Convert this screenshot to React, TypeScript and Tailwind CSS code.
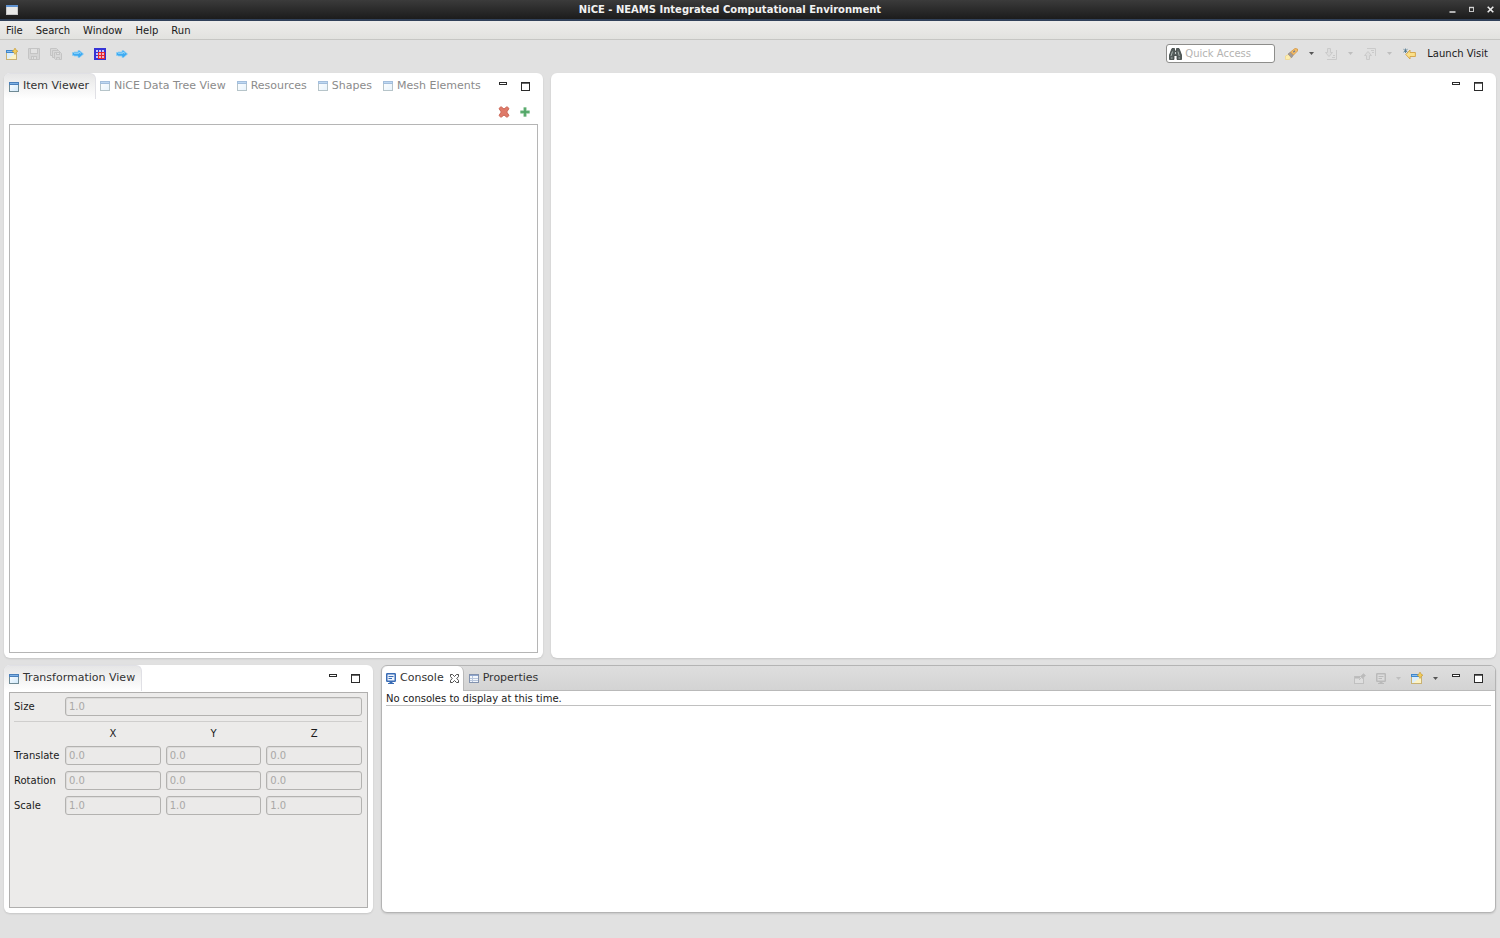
import type { ReactNode } from "react";
import clsx from "clsx";

const MENUS = ["File", "Search", "Window", "Help", "Run"];
const VIEW_TABS = ["Item Viewer", "NiCE Data Tree View", "Resources", "Shapes", "Mesh Elements"];
const AXES = ["X", "Y", "Z"];
const TRANSFORM_ROWS = [
  { label: "Translate", value: "0.0" },
  { label: "Rotation", value: "0.0" },
  { label: "Scale", value: "1.0" },
];

const FIELD =
  "h-[19px] w-full min-w-0 rounded-[3px] border border-[#b3b2b0] bg-[#ebeae9] px-[3px] text-[10px] text-[#a9a8a6] shadow-[inset_1px_1px_0_#dddcdb]";

/* ---------- icons ---------- */

function ViewIcon({ faded }: { faded?: boolean }) {
  return (
    <svg viewBox="0 0 10 10" className={clsx("size-[10px] shrink-0", faded && "opacity-50")}>
      <defs>
        <linearGradient id="viewBody" x1="0" y1="0" x2="1" y2="1">
          <stop offset="0" stopColor="#ffffff" />
          <stop offset="1" stopColor="#cfe8fb" />
        </linearGradient>
      </defs>
      <rect x="0.5" y="0.5" width="9" height="9" fill="url(#viewBody)" stroke="#6f8a94" />
      <rect x="0" y="0" width="10" height="3" fill="#4a7fba" />
      <rect x="1" y="1" width="8" height="1" fill="#7fb2e6" />
    </svg>
  );
}

function WindowIcon() {
  return (
    <svg viewBox="0 0 12 10" className="h-[10px] w-3">
      <rect x="0.5" y="0.5" width="11" height="9" fill="#e9e9e7" stroke="#c9c9c9" />
      <rect x="0" y="0" width="12" height="2" fill="#5f92d0" />
    </svg>
  );
}

function NewIcon() {
  return (
    <svg viewBox="0 0 12 12" className="size-3">
      <rect x="0.5" y="2.5" width="10" height="9" fill="#dceefb" stroke="#c9b273" />
      <path d="M2 11 L10 5 V11 Z" fill="#fdf3c4" />
      <rect x="0" y="2" width="8" height="3" fill="#3f86cc" />
      <rect x="1" y="3" width="6" height="1" fill="#8cc0ee" />
      <path d="M9 0 L10 2 L12 3.2 L10 4.4 L9 6.5 L8 4.4 L6 3.2 L8 2 Z" fill="#f3cd5a" stroke="#c79c37" strokeWidth="0.6" />
    </svg>
  );
}

function SaveIcon() {
  return (
    <svg viewBox="0 0 12 12" className="size-3" fill="none" stroke="#c4c4c4">
      <path d="M0.5 0.5 H11.5 V11.5 H1.5 L0.5 10.5 Z" fill="#d4d4d4" />
      <rect x="2.5" y="0.5" width="7" height="5" fill="#e2e2e2" />
      <rect x="3.5" y="8.5" width="5" height="3" fill="#dedede" />
      <path d="M5.5 9 V11" />
    </svg>
  );
}

function SaveAllIcon() {
  return (
    <svg viewBox="0 0 12 12" className="size-3" fill="#d8d8d8" stroke="#c4c4c4">
      <path d="M0.5 0.5 H6.5 L8.5 2.5 V7.5 H0.5 Z" />
      <path d="M2.5 2.5 H8.5 L10.5 4.5 V9.5 H2.5 Z" />
      <path d="M4.5 4.5 H10.5 L11.5 5.5 V11.5 H5.5 L4.5 10.5 Z" />
      <rect x="6.5" y="4.5" width="3" height="2" fill="#e2e2e2" />
      <path d="M6.5 11.5 V9.5 H9.5 V11.5" />
    </svg>
  );
}

function BlueArrowIcon() {
  return (
    <svg viewBox="0 0 12 12" className="size-3">
      <path
        d="M0.5 4.5 H2 V4 H6 V2.5 H7.5 L11.5 6 L7.5 9.5 H6 V8 H2 V7.5 H0.5 Z"
        fill="#3fabf2"
        stroke="#8accf3"
        strokeWidth="0.7"
      />
      <path d="M2 5.2 H7 V4 L9 5.4" stroke="#9bdafc" fill="none" />
    </svg>
  );
}

function MeshIcon() {
  return (
    <svg viewBox="0 0 12 12" className="size-3" shapeRendering="crispEdges">
      <rect width="12" height="12" fill="#3533d6" />
      <path d="M4 4 H11 V11 H4 Z" fill="#e6262f" />
      {[2, 5, 8].map((x) =>
        [2, 5, 8].map((y) => (
          <rect key={`${x}-${y}`} x={x} y={y} width="2" height="2" fill={x > 2 && y > 2 ? "#f5b3ba" : "#c9c8f4"} />
        ))
      )}
    </svg>
  );
}

function BinocularsIcon() {
  return (
    <svg viewBox="0 0 13 12" className="h-3 w-[13px] shrink-0">
      <path
        d="M3 0.5 H5.5 V3 H7.5 V0.5 H10 L11 3 L12.5 7 V11.5 H8 V7.5 H5 V11.5 H0.5 V7 L2 3 Z"
        fill="#555e5d"
        stroke="#38403f"
        strokeWidth="0.8"
      />
      <path d="M3.5 3.5 L2 8 M9 3.5 L10.3 8 M2 10 H3.5 M9.5 10 H11" stroke="#aab3b1" />
      <rect x="6" y="4" width="1" height="2" fill="#c5cccb" />
    </svg>
  );
}

function FlashlightIcon() {
  return (
    <svg viewBox="0 0 13 12" className="h-3 w-[13px]">
      <path d="M0.5 8 L3.5 6.5 L6 9 L4.5 11.5 H0.5 Z" fill="#fdeeb0" stroke="#f0d487" strokeWidth="0.7" />
      <path d="M3 6 L5.5 4 L8.5 7 L6.5 9.8 Z" fill="#a19a98" stroke="#8d827c" strokeWidth="0.6" />
      <path d="M5.5 4 L10 0.5 L12.5 1 V3 L8.5 7 Z" fill="#f3bd69" stroke="#d4963f" strokeWidth="0.8" />
      <path d="M8.3 4.3 L10 2.8" stroke="#6f7b93" strokeWidth="1.2" />
    </svg>
  );
}

function AnnotationIcon({ up }: { up?: boolean }) {
  return (
    <svg viewBox="0 0 12 12" className="size-3" fill="none" stroke="#cacaca">
      {up ? (
        <>
          <path d="M4 3.5 L7.5 7.5 H5.5 V11.5 H2.5 V7.5 H0.5 Z" fill="#dcdcdc" />
          <path d="M3 0.5 H11.5 V8 M7 2.5 H10 M8 4.5 H10" />
        </>
      ) : (
        <>
          <path d="M4 8.5 L7.5 4.5 H5.5 V0.5 H2.5 V4.5 H0.5 Z" fill="#dcdcdc" />
          <path d="M11.5 2 V11.5 H2 M8 7.5 H10 M7 9.5 H10" />
        </>
      )}
    </svg>
  );
}

function LastEditIcon() {
  return (
    <svg viewBox="0 0 13 12" className="h-3 w-[13px]">
      <path
        d="M2.8 6.5 L7 2 V4.5 H12.4 V8.5 H7 V11 Z"
        fill="#fbe089"
        stroke="#d3a244"
        strokeWidth="0.9"
      />
      <path d="M2.5 0.5 V5 M0.5 1.3 L4.5 4.2 M4.5 1.3 L0.5 4.2" stroke="#48718a" strokeWidth="0.8" />
    </svg>
  );
}

function Caret({ faded }: { faded?: boolean }) {
  return (
    <svg viewBox="0 0 5 3" className="h-[3px] w-[5px]">
      <path d="M0 0 H5 L2.5 3 Z" fill={faded ? "#bebebe" : "#555"} />
    </svg>
  );
}

function MinimizeIcon() {
  return (
    <svg viewBox="0 0 8 9" className="h-[9px] w-2">
      <rect x="0.5" y="0.5" width="7" height="2" fill="#fff" stroke="#2b2b2b" />
    </svg>
  );
}

function MaximizeIcon() {
  return (
    <svg viewBox="0 0 9 9" className="size-[9px]">
      <rect x="0.5" y="0.5" width="8" height="8" fill="#fff" stroke="#2b2b2b" />
      <path d="M1 1.5 H8" stroke="#6a6a6a" />
    </svg>
  );
}

function DeleteIcon() {
  return (
    <svg viewBox="0 0 12 12" className="size-3">
      <path
        d="M1 2.5 L3 0.7 L6 3 L9 0.7 L11 2.5 L8.7 6 L11 9.5 L9 11.3 L6 9 L3 11.3 L1 9.5 L3.3 6 Z"
        fill="#df7a69"
        stroke="#cb6655"
        strokeLinejoin="round"
      />
    </svg>
  );
}

function AddIcon() {
  return (
    <svg viewBox="0 0 10 10" className="size-[10px]">
      <path d="M3.8 0.5 H6.2 V3.8 H9.5 V6.2 H6.2 V9.5 H3.8 V6.2 H0.5 V3.8 H3.8 Z" fill="#52a768" stroke="#86c394" strokeWidth="0.6" />
    </svg>
  );
}

function ConsoleIcon({ faded }: { faded?: boolean }) {
  const c = faded ? "#bababa" : "#3a6cb5";
  return (
    <svg viewBox="0 0 10 11" className="h-[11px] w-[10px] shrink-0">
      <rect x="0.75" y="0.75" width="8.5" height="7.5" rx="0.5" fill={faded ? "#dcdcdc" : "#f1f6fd"} stroke={c} strokeWidth="1.5" />
      <path d="M2.5 3.5 H7.5 M2.5 5.5 H6" stroke={c} />
      <path d="M3.5 9.5 H6.5 M2 10.5 H8" stroke={c} />
    </svg>
  );
}

function PropertiesIcon() {
  return (
    <svg viewBox="0 0 10 9" className="h-[9px] w-[10px] shrink-0">
      <rect x="0.5" y="0.5" width="9" height="8" fill="#f3f7fc" stroke="#8292ae" />
      <path d="M1 1.5 H9" stroke="#8fa6cf" />
      <path d="M3.5 2 V8 M1 4.5 H9 M1 6.5 H9" stroke="#b7c5dc" />
    </svg>
  );
}

function PinIcon() {
  return (
    <svg viewBox="0 0 12 11" className="h-[11px] w-3" stroke="#c0c0c0">
      <rect x="0.5" y="3.5" width="9" height="7" fill="#dedede" />
      <path d="M1 4.5 H6" stroke="#bababa" strokeWidth="2" />
      <path d="M5 7 L7.5 4.5 L6.5 3.5 L9.5 0.7 L11.5 2.5 L8.7 5.5 L7.5 4.5" fill="#bbb" />
    </svg>
  );
}

function CloseTabIcon() {
  return (
    <svg viewBox="0 0 9 9" className="size-[9px]">
      <path
        d="M0.5 0.5 H2.5 L4.5 2.5 L6.5 0.5 H8.5 V2.5 L6.8 4.5 L8.5 6.5 V8.5 H6.5 L4.5 6.5 L2.5 8.5 H0.5 V6.5 L2.2 4.5 L0.5 2.5 Z"
        fill="#fff"
        stroke="#3a3a3a"
        strokeWidth="0.9"
      />
    </svg>
  );
}

/* ---------- pieces ---------- */

function IconButton({ label, disabled, children }: { label: string; disabled?: boolean; children: ReactNode }) {
  return (
    <button type="button" aria-label={label} disabled={disabled} className="flex items-center justify-center">
      {children}
    </button>
  );
}

function PanelControls() {
  return (
    <div className="flex w-[31px] shrink-0 items-center justify-between">
      <IconButton label="Minimize">
        <MinimizeIcon />
      </IconButton>
      <IconButton label="Maximize">
        <MaximizeIcon />
      </IconButton>
    </div>
  );
}

function Panel({ children, className }: { children: ReactNode; className?: string }) {
  return (
    <section
      className={clsx(
        "flex min-h-0 min-w-0 flex-col rounded-md bg-white shadow-[0_1px_2px_rgba(0,0,0,0.12)]",
        className
      )}
    >
      {children}
    </section>
  );
}

const SELECTED_TAB =
  "h-full rounded-t-md border-t border-r border-[#e0e0e5] bg-linear-to-b from-[#e6e6e6] to-white pr-1.5 pl-[5px] text-[#333]";

function TitleBar() {
  return (
    <header className="flex h-[21px] shrink-0 items-center border-b-2 border-[#32425a] bg-linear-to-b from-[#3b3b3b] via-[#2b2b2b] to-[#1c1c1c] px-1.5">
      <div className="flex flex-1">
        <WindowIcon />
      </div>
      <h1 className="text-[10px] font-bold text-[#f2f2f2]">NiCE - NEAMS Integrated Computational Environment</h1>
      <div className="ml-10 flex flex-1 items-center justify-end gap-3">
        <IconButton label="Minimize window">
          <svg viewBox="0 0 7 7" className="size-[7px]">
            <path d="M0.5 6 H6.5" stroke="#d6d6d6" strokeWidth="1.6" />
          </svg>
        </IconButton>
        <IconButton label="Maximize window">
          <svg viewBox="0 0 7 7" className="size-[7px]">
            <rect x="1.5" y="1.5" width="4" height="4" fill="none" stroke="#c4c4c4" />
            <path d="M1 1.5 H6" stroke="#d6d6d6" strokeWidth="1.4" />
          </svg>
        </IconButton>
        <IconButton label="Close window">
          <svg viewBox="0 0 7 7" className="size-[7px]">
            <path d="M0.7 0.7 L6.3 6.3 M6.3 0.7 L0.7 6.3" stroke="#ececec" strokeWidth="1.6" />
          </svg>
        </IconButton>
      </div>
    </header>
  );
}

function Toolbar() {
  return (
    <div className="flex h-[33px] shrink-0 items-center pr-3 pb-1.5 pl-1.5">
      <div className="flex items-center gap-[10px]">
        <IconButton label="New"><NewIcon /></IconButton>
        <IconButton label="Save" disabled><SaveIcon /></IconButton>
        <IconButton label="Save All" disabled><SaveAllIcon /></IconButton>
        <IconButton label="Import"><BlueArrowIcon /></IconButton>
        <IconButton label="Mesh"><MeshIcon /></IconButton>
        <IconButton label="Export"><BlueArrowIcon /></IconButton>
      </div>
      <label className="ml-auto flex h-[19px] w-[109px] items-center gap-[3px] rounded-[3px] border border-[#8d8d8b] bg-white px-0.5">
        <BinocularsIcon />
        <input
          type="text"
          aria-label="Quick Access"
          placeholder="Quick Access"
          className="w-full min-w-0 text-[10px] outline-none placeholder:text-[#b4b3b1]"
        />
      </label>
      <div className="ml-[10px] flex items-center gap-[11px]">
        <IconButton label="Search"><FlashlightIcon /></IconButton>
        <IconButton label="Search options"><Caret /></IconButton>
        <IconButton label="Next annotation" disabled><AnnotationIcon /></IconButton>
        <IconButton label="Next annotation options" disabled><Caret faded /></IconButton>
        <IconButton label="Previous annotation" disabled><AnnotationIcon up /></IconButton>
        <IconButton label="Previous annotation options" disabled><Caret faded /></IconButton>
        <IconButton label="Last edit location"><LastEditIcon /></IconButton>
        <button type="button">Launch Visit</button>
      </div>
    </div>
  );
}

function ItemViewerPanel() {
  return (
    <Panel>
      <div className="flex h-[26px] shrink-0 items-center pr-[13px]">
        <div role="tablist" className="flex h-full items-center gap-1">
          {VIEW_TABS.map((tab, i) => (
            <button
              key={tab}
              type="button"
              role="tab"
              aria-selected={i === 0}
              className={clsx(
                "flex items-center gap-1 text-[11px] whitespace-nowrap",
                i === 0 ? SELECTED_TAB : "pr-[7px] text-[#8b8b8b]"
              )}
            >
              <ViewIcon faded={i > 0} />
              {tab}
            </button>
          ))}
        </div>
        <div className="ml-auto">
          <PanelControls />
        </div>
      </div>
      <div className="flex h-[25px] shrink-0 items-center justify-end gap-[10px] pr-[13px]">
        <IconButton label="Delete item"><DeleteIcon /></IconButton>
        <IconButton label="Add item"><AddIcon /></IconButton>
      </div>
      <div className="mx-[5px] mb-[5px] flex-1 border border-[#b5b5b5]" />
    </Panel>
  );
}

function TransformationPanel() {
  return (
    <Panel>
      <div className="flex h-[26px] shrink-0 items-center pr-[13px]">
        <button
          type="button"
          role="tab"
          aria-selected
          className={clsx("flex items-center gap-1 text-[11px] whitespace-nowrap", SELECTED_TAB)}
        >
          <ViewIcon />
          Transformation View
        </button>
        <div className="ml-auto">
          <PanelControls />
        </div>
      </div>
      <div className="mx-[5px] mt-px mb-[5px] flex-1 border border-[#b0afae] bg-[#ecebea] pt-1 pr-[5px] pl-1">
        <div className="grid grid-cols-[46px_1fr] items-center gap-x-[5px]">
          <label htmlFor="size">Size</label>
          <input id="size" disabled defaultValue="1.0" className={FIELD} />
        </div>
        <hr className="mt-[5px] border-[#cfcecd]" />
        <div className="mt-1.5 grid grid-cols-[46px_1fr_1fr_1fr] items-center gap-x-[5px] gap-y-1.5">
          <span />
          {AXES.map((axis) => (
            <span key={axis} className="text-center leading-3">
              {axis}
            </span>
          ))}
          {TRANSFORM_ROWS.map((row) => (
            <div key={row.label} className="contents">
              <label htmlFor={`${row.label}-X`}>{row.label}</label>
              {AXES.map((axis) => (
                <input
                  key={axis}
                  id={`${row.label}-${axis}`}
                  aria-label={`${row.label} ${axis}`}
                  disabled
                  defaultValue={row.value}
                  className={FIELD}
                />
              ))}
            </div>
          ))}
        </div>
      </div>
    </Panel>
  );
}

function ConsolePanel() {
  return (
    <Panel className="overflow-hidden border border-[#b4b4b4]">
      <div className="flex h-[25px] shrink-0 items-stretch bg-linear-to-b from-[#dedede] to-[#d3d3d3]">
        <div className="flex items-center gap-1.5 rounded-t-md border-r border-[#b9b9b9] bg-white px-1">
          <button type="button" role="tab" aria-selected className="flex items-center gap-1 text-[11px] text-[#333]">
            <ConsoleIcon />
            Console
          </button>
          <IconButton label="Close Console"><CloseTabIcon /></IconButton>
        </div>
        <div className="flex flex-1 items-center border-b border-[#b9b9b9] pr-3 pl-[5px]">
          <button type="button" role="tab" aria-selected={false} className="flex items-center gap-1 text-[11px] text-[#333]">
            <PropertiesIcon />
            Properties
          </button>
          <div className="mr-[14px] ml-auto flex items-center gap-[10px]">
            <IconButton label="Pin Console" disabled><PinIcon /></IconButton>
            <IconButton label="Display Selected Console" disabled><ConsoleIcon faded /></IconButton>
            <IconButton label="Display options" disabled><Caret faded /></IconButton>
            <IconButton label="Open Console"><NewIcon /></IconButton>
            <IconButton label="Open Console options"><Caret /></IconButton>
          </div>
          <PanelControls />
        </div>
      </div>
      <p className="mx-1 border-b border-[#c0c0c0] pt-px leading-[13px]">No consoles to display at this time.</p>
    </Panel>
  );
}

export default function App() {
  return (
    <div className="flex h-screen flex-col bg-[#e1e1e1] font-['DejaVu_Sans',sans-serif] text-[10px] text-[#1a1a1a]">
      <TitleBar />
      <nav className="flex h-[19px] shrink-0 items-center gap-[13px] border-b border-[#c6c6c3] bg-linear-to-b from-[#eeedeb] to-[#e2e2df] px-1.5">
        {MENUS.map((menu) => (
          <button key={menu} type="button">
            {menu}
          </button>
        ))}
      </nav>
      <Toolbar />
      <main className="flex min-h-0 flex-1 flex-col gap-[7px] px-1 pb-[25px]">
        <div className="grid min-h-0 flex-[585] grid-cols-[539fr_945fr] gap-2">
          <ItemViewerPanel />
          <Panel>
            <div className="flex h-[26px] items-center justify-end pr-[13px]">
              <PanelControls />
            </div>
          </Panel>
        </div>
        <div className="grid min-h-0 flex-[248] grid-cols-[369fr_1115fr] gap-2">
          <TransformationPanel />
          <ConsolePanel />
        </div>
      </main>
    </div>
  );
}
